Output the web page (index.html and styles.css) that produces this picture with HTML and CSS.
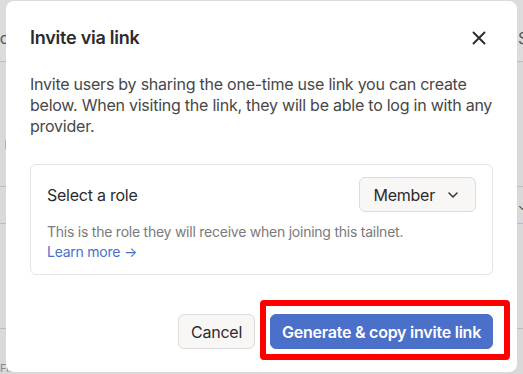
FILE: index.html
```html
<!DOCTYPE html>
<html lang="en">
<head>
    <meta charset="UTF-8">
    <title>Invite via link</title>
    <link rel="stylesheet" href="styles.css">
</head>
<body>
    <div class="page">
        <div class="page-row head-row">
            <span class="cell-left">ic</span>
            <span class="cell-right">S</span>
        </div>
        <div class="page-row tall-row">
            <span class="status-dot"></span>
        </div>
        <div class="page-row mid-row">
            <span class="row-chevron">&#8964;</span>
        </div>
        <div class="page-row big-row"></div>
        <div class="page-row last-row">
            <span class="cell-left faint">Fl... ...... .... .. ....</span>
        </div>
    </div>

    <div class="modal">
        <div class="modal-header">
            <h2>Invite via link</h2>
            <button class="close-btn" aria-label="Close">
                <svg width="14" height="14" viewBox="0 0 14 14">
                    <path d="M1.5 1.5 L12.5 12.5 M12.5 1.5 L1.5 12.5" stroke="#2b2b2b" stroke-width="1.9" stroke-linecap="round"/>
                </svg>
            </button>
        </div>
        <p class="modal-text">Invite users by sharing the one-time use link you can create below. When visiting the link, they will be able to log in with any provider.</p>
        <div class="role-card">
            <div class="role-row">
                <span class="role-label">Select a role</span>
                <button class="role-select">
                    Member
                    <svg width="10" height="6" viewBox="0 0 10 6">
                        <path d="M1 1 L5 5 L9 1" fill="none" stroke="#333" stroke-width="1.5" stroke-linecap="round" stroke-linejoin="round"/>
                    </svg>
                </button>
            </div>
            <p class="role-help">This is the role they will receive when joining this tailnet.<br><a href="#">Learn more &rarr;</a></p>
        </div>
        <div class="modal-footer">
            <button class="btn btn-cancel">Cancel</button>
            <button class="btn btn-primary highlighted">Generate &amp; copy invite link</button>
        </div>
    </div>
</body>
</html>
```
FILE: styles.css
```css
:root {
    --backdrop: #d9d9d9;
    --backdrop-line: #bdbdbd;
    --text-color: #2b2b2b;
    --muted: #7a7a7a;
    --blue: #4b70c9;
    --border: #e6e4e2;
}
body {
    margin: 0;
    font-family: 'Inter', 'Noto Sans', sans-serif;
    letter-spacing: -0.015em;
    background: var(--backdrop);
    color: var(--text-color);
    overflow: hidden;
}
.page {
    height: 374px;
}
.page-row {
    display: flex;
    justify-content: space-between;
    align-items: center;
    border-bottom: 1px solid var(--backdrop-line);
    font-size: 16px;
    color: #555;
}
.head-row {
    height: 62px;
    padding-top: 14px;
    box-sizing: border-box;
    background: #dcdcdc;
}
.tall-row {
    height: 124px;
    align-items: flex-start;
}
.mid-row {
    height: 36px;
    justify-content: flex-end;
}
.big-row {
    height: 104px;
}
.last-row {
    height: 44px;
    border-bottom: none;
    align-items: flex-end;
}
.cell-left {
    margin-left: -4px;
}
.cell-right {
    margin-right: -5px;
}
.faint {
    font-size: 11px;
    color: #888;
    margin-left: 0;
    line-height: 10px;
}
.status-dot {
    width: 2px;
    height: 9px;
    background: #e8a45a;
    margin: 78px 0 0 5px;
}
.row-chevron {
    font-size: 12px;
    color: #444;
    margin-right: -4px;
}

/* dialog sits over the page */
.modal {
    position: absolute;
    left: 6px;
    top: 1px;
    width: 511px;
    height: 371px;
    box-sizing: border-box;
    background: #fff;
    border-radius: 8px;
    padding: 25px 24px 23px;
    display: flex;
    flex-direction: column;
}
.modal-header {
    display: flex;
    justify-content: space-between;
    align-items: center;
    height: 24px;
}
.modal-header h2 {
    margin: 0;
    font-size: 18px;
    font-weight: 600;
    line-height: 24px;
}
.close-btn {
    background: none;
    border: none;
    padding: 0;
    margin-right: 7px;
    width: 14px;
    height: 14px;
    display: flex;
}
.modal-text {
    margin: 24px 0 0;
    font-size: 16px;
    line-height: 21px;
    color: #474747;
}
.role-card {
    margin-top: 27px;
    border: 1px solid var(--border);
    border-radius: 6px;
    padding: 12px 16px 12px;
}
.role-row {
    display: flex;
    justify-content: space-between;
    align-items: center;
}
.role-label {
    font-size: 16px;
}
.role-select {
    display: flex;
    align-items: center;
    gap: 13px;
    height: 35px;
    padding: 0 17px 0 13px;
    font-family: inherit;
    letter-spacing: inherit;
    font-size: 16px;
    color: var(--text-color);
    background: #f8f7f6;
    border: 1px solid #dedbd8;
    border-radius: 6px;
}
.role-help {
    margin: 10px 0 0;
    font-size: 14px;
    line-height: 20px;
    color: var(--muted);
}
.role-help a {
    color: var(--blue);
    text-decoration: none;
}
.modal-footer {
    margin-top: auto;
    display: flex;
    justify-content: flex-end;
    gap: 15px;
}
.btn {
    height: 35px;
    font-family: inherit;
    letter-spacing: inherit;
    font-size: 16px;
    border-radius: 6px;
    padding: 0 12px;
}
.btn-cancel {
    background: #f8f7f6;
    border: 1px solid #dedbd8;
    color: var(--text-color);
}
.btn-primary {
    background: var(--blue);
    border: 1px solid var(--blue);
    color: #fff;
    font-weight: 600;
    padding: 0 11px;
}
.highlighted {
    position: relative;
}
.highlighted::after {
    content: "";
    position: absolute;
    left: -11px;
    top: -15px;
    right: -18px;
    bottom: -12px;
    border: 6px solid #ff0000;
    border-radius: 4px;
}
```
